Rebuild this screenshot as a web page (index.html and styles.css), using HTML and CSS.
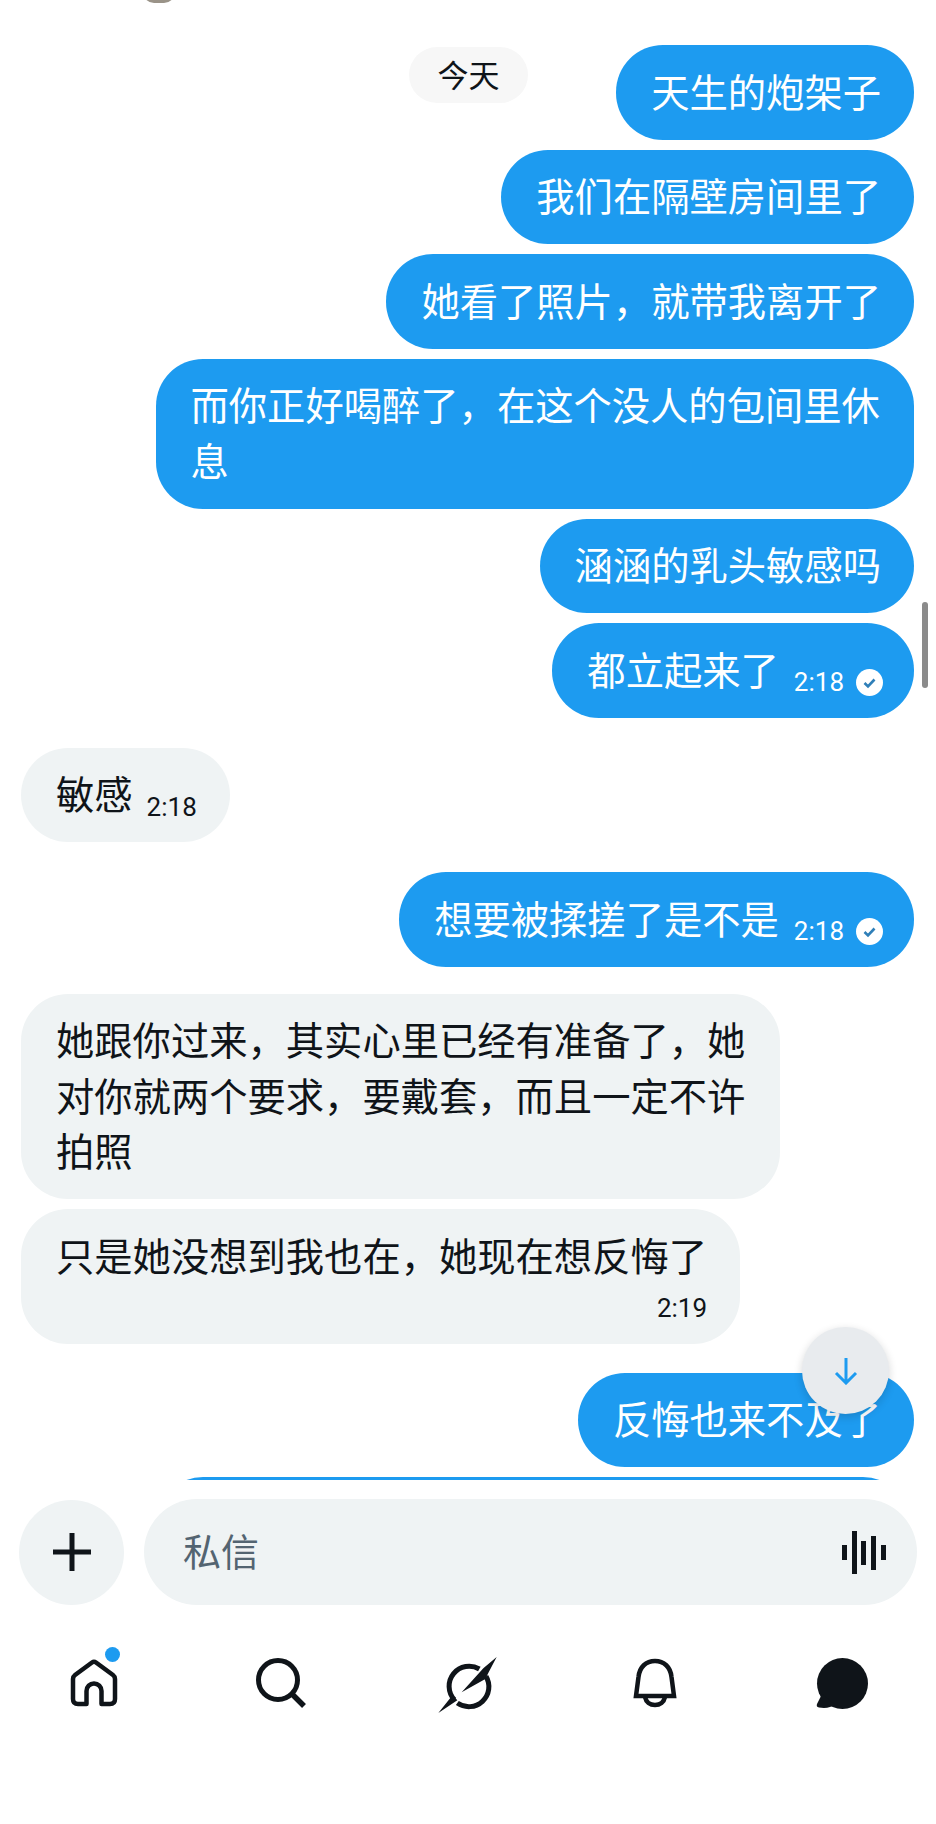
FILE: index.html
```html
<!DOCTYPE html>
<html lang="zh-CN">
<head>
<meta charset="utf-8">
<title>私信</title>
<link rel="stylesheet" href="styles.css">
</head>
<body>
<div class="screen">
  <div class="avatar-edge"></div>
  <div class="date-pill">今天</div>
  <div class="scrollbar"></div>
  <main class="thread">
    <div class="bubble out">天生的炮架子</div>
    <div class="bubble out">我们在隔壁房间里了</div>
    <div class="bubble out">她看了照片&#65292;就带我离开了</div>
    <div class="bubble out">而你正好喝醉了&#65292;在这个没人的包间里休息</div>
    <div class="bubble out">涵涵的乳头敏感吗</div>
    <div class="bubble out row">
      <span>都立起来了</span>
      <span class="meta">2:18
        <svg class="check" viewBox="0 0 27 27"><circle cx="13.5" cy="13.5" r="13.5" fill="#fff"/><path d="M8.5 14l3.5 3.500 6.500-7" fill="none" stroke="#2f7fb8" stroke-width="2.600"/></svg>
      </span>
    </div>
    <div class="bubble in row group">
      <span>敏感</span>
      <span class="meta">2:18</span>
    </div>
    <div class="bubble out row group">
      <span>想要被揉搓了是不是</span>
      <span class="meta">2:18
        <svg class="check" viewBox="0 0 27 27"><circle cx="13.5" cy="13.5" r="13.5" fill="#fff"/><path d="M8.5 14l3.5 3.500 6.500-7" fill="none" stroke="#2f7fb8" stroke-width="2.600"/></svg>
      </span>
    </div>
    <div class="bubble in group-tight">她跟你过来&#65292;其实心里已经有准备了&#65292;她对你就两个要求&#65292;要戴套&#65292;而且一定不许拍照</div>
    <div class="bubble in stacked">
      <span>只是她没想到我也在&#65292;她现在想反悔了</span>
      <span class="meta meta-below">2:19</span>
    </div>
    <div class="bubble out group-last">反悔也来不及了</div>
    <div class="bubble out clipped"></div>
  </main>

  <button class="scroll-down" aria-label="滚动到底部">
    <svg viewBox="0 0 24 28" width="24" height="28"><path d="M12 1v25M2 16l10 10 10-10" fill="none" stroke="#1d9bf0" stroke-width="3"/></svg>
  </button>

  <div class="composer">
    <button class="add" aria-label="添加">
      <svg viewBox="0 0 40 40" width="40" height="40"><path d="M20 1v38M1 20h38" fill="none" stroke="#0f1419" stroke-width="5"/></svg>
    </button>
    <div class="input">
      <span class="placeholder">私信</span>
      <svg class="mic" viewBox="0 0 44 43" width="44" height="43"><g fill="#0f1419"><rect x="0" y="14" width="5" height="15"/><rect x="10" y="0" width="5" height="43"/><rect x="19" y="10" width="5" height="24"/><rect x="29" y="5" width="5" height="34"/><rect x="39" y="14" width="5" height="15"/></g></svg>
    </div>
  </div>

  <nav class="nav">
    <a class="nav-item">
      <span class="icon-wrap">
        <svg viewBox="0 0 48 48" width="48" height="48"><path d="M3 20q0-2.500 2-4L22 3.500q2-1.500 4 0L43 16q2 1.500 2 4V40q0 5-5 5H31.500V32a7.500 7.500 0 0 0-15 0V45H8q-5 0-5-5Z" fill="none" stroke="#0f1419" stroke-width="4.500" stroke-linejoin="round"/></svg>
        <span class="dot"></span>
      </span>
    </a>
    <a class="nav-item">
      <svg viewBox="0 0 50 50" width="50" height="50"><circle cx="22" cy="22" r="19.500" fill="none" stroke="#0f1419" stroke-width="5"/><path d="M35 35l13 13" stroke="#0f1419" stroke-width="5.500"/></svg>
    </a>
    <a class="nav-item">
      <svg viewBox="-6 0 300 240" width="100" height="80"><g fill="none" stroke="#0f1419" stroke-width="15"><path d="M178 78A60 60 0 0 0 103 170"/><path d="M112 180A60 60 0 0 0 198 100"/></g><path d="M230 42L190 76L125 148L196 108L206 88ZM55 210L98 156L112 172Z" fill="#0f1419"/></svg>
    </a>
    <a class="nav-item">
      <svg viewBox="0 0 44 50" width="44" height="50"><path d="M3 38H41L38.500 19C37.500 9 31 3 22 3S6.500 9 5.500 19Z" fill="none" stroke="#0f1419" stroke-width="4.500"/><path d="M12 39c1 5 5 8 10 8s9-3 10-8" fill="none" stroke="#0f1419" stroke-width="4.500"/></svg>
    </a>
    <a class="nav-item">
      <svg viewBox="0 0 52 51" width="52" height="51"><circle cx="26.500" cy="25.500" r="25.500" fill="#0f1419"/><path d="M6 36L1 46q-1 3 2 3.500c7 1 12 0 16-3Z" fill="#0f1419"/></svg>
    </a>
  </nav>
</div>
</body>
</html>
```

FILE: styles.css
```css
* { box-sizing: border-box; }

html, body {
  margin: 0;
  padding: 0;
  background: #fff;
}

.screen {
  position: relative;
  width: 936px;
  height: 1824px;
  overflow: hidden;
  background: #fff;
  font-family: "Noto Sans CJK SC", "Noto Sans", sans-serif;
  color: #0f1419;
}

.avatar-edge {
  position: absolute;
  top: -8px;
  left: 143px;
  width: 32px;
  height: 11px;
  border-radius: 0 0 16px 16px;
  background: #9a9388;
}

.date-pill {
  position: absolute;
  top: 47px;
  left: 409px;
  width: 119px;
  height: 56px;
  border-radius: 28px;
  background: #f7f7f7;
  font-size: 31px;
  line-height: 53px;
  text-align: center;
}

.scrollbar {
  position: absolute;
  top: 602px;
  left: 922px;
  width: 6px;
  height: 86px;
  border-radius: 3px;
  background: #8b8b8b;
}

.thread {
  display: flex;
  flex-direction: column;
  align-items: flex-end;
  gap: 10px;
  height: 1480px;
  padding: 45px 22px 0 21px;
  overflow: hidden;
}

.bubble {
  flex: none;
  max-width: 758.500px;
  padding: 17.500px 33px 21.500px 35px;
  border-radius: 47px;
  font-size: 38.300px;
  line-height: 55.500px;
}

.bubble.out {
  background: #1d9bf0;
  color: #fff;
}

.bubble.in {
  align-self: flex-start;
  background: #eff3f4;
  color: #0f1419;
}

.row {
  display: flex;
  align-items: flex-end;
  gap: 14px;
}

.bubble.out.row {
  gap: 15px;
  padding-right: 31px;
}

.group { margin-top: 20px; }
.group-tight { margin-top: 17px; }
.group-last { margin-top: 19px; }

.stacked {
  display: flex;
  flex-direction: column;
  padding-bottom: 15.500px;
}

.meta {
  display: inline-flex;
  align-items: center;
  gap: 12px;
  height: 36px;
  font-family: Roboto, "Liberation Sans", sans-serif;
  font-size: 26px;
  line-height: 36px;
  white-space: nowrap;
}

.bubble.row .meta { margin-bottom: -4px; }

.meta-below {
  align-self: flex-end;
  height: 40px;
  margin-top: 6px;
  line-height: 40px;
}

.check {
  width: 27px;
  height: 27px;
}

.clipped {
  width: 754px;
  height: 100px;
  margin-right: 4px;
}

.scroll-down {
  position: absolute;
  top: 1327px;
  left: 802px;
  display: flex;
  align-items: center;
  justify-content: center;
  width: 87px;
  height: 87px;
  padding: 0;
  border: 0;
  border-radius: 50%;
  background: #e8ebee;
  box-shadow: 0 3px 8px rgba(15, 20, 25, 0.18);
}

.composer {
  display: flex;
  align-items: center;
  gap: 20px;
  margin-top: 19px;
  padding: 0 19px;
}

.add {
  flex: none;
  display: flex;
  align-items: center;
  justify-content: center;
  width: 105px;
  height: 105px;
  padding: 0;
  border: 0;
  border-radius: 50%;
  background: #eff3f4;
}

.input {
  flex: 1;
  display: flex;
  align-items: center;
  justify-content: space-between;
  height: 106px;
  padding: 0 31px 0 39px;
  border-radius: 53px;
  background: #eff3f4;
}

.placeholder {
  font-size: 38px;
  line-height: 50px;
  margin-top: -4px;
  color: #536471;
}

.nav {
  display: grid;
  grid-template-columns: repeat(5, 1fr);
  align-items: center;
  height: 156px;
}

.nav-item {
  display: flex;
  align-items: center;
  justify-content: center;
}

.icon-wrap {
  position: relative;
  display: flex;
}

.dot {
  position: absolute;
  top: -12px;
  right: -2px;
  width: 15px;
  height: 15px;
  border-radius: 50%;
  background: #1d9bf0;
}
```
